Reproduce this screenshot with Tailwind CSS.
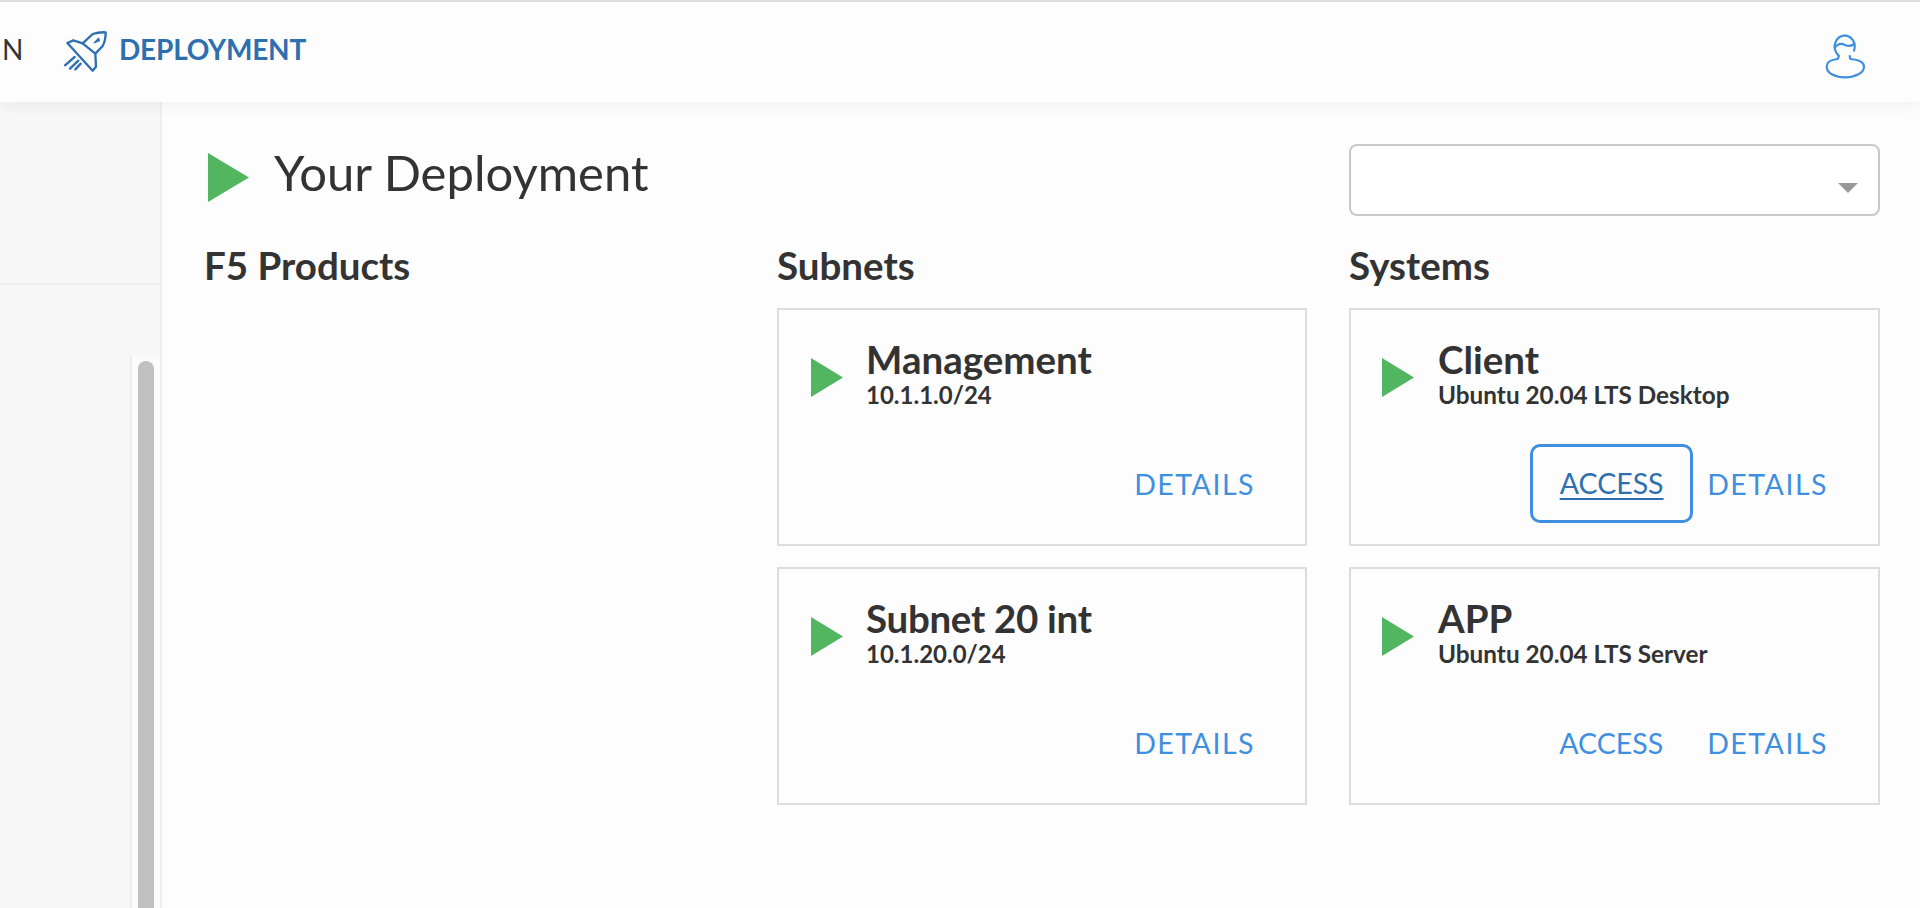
<!DOCTYPE html>
<html lang="en">
<head>
  <meta charset="UTF-8">
  <meta name="viewport" content="width=device-width, initial-scale=1.0">
  <title>Your Deployment</title>
  <script src="https://cdn.jsdelivr.net/npm/@tailwindcss/browser@4"></script>
</head>
<body class="bg-[#fdfdfd] h-[908px] overflow-hidden font-['Lato',sans-serif] text-[#333]">

  <!-- Top nav -->
  <header class="relative z-10 h-[102px] border-t-2 border-[#ddd] bg-[#fdfdfd] shadow-[0_4px_14px_rgba(0,0,0,0.05)] flex items-start">
    <span class="text-[28px] leading-none mt-[33px] w-[40px] pl-[2px]">N</span>
    <svg class="w-[70px] h-[70px] mt-[8px] shrink-0" viewBox="0 0 210 210" fill="none" stroke="#2e6fb0" stroke-width="7" stroke-linejoin="round" stroke-linecap="round">
      <path d="M82 99 L100 91 L128 100 L158 72 Q176 66 197 67 Q197 92 188 108 L166 131 L168 170 L158 182 Z"/>
      <path d="M128 100 L166 131"/>
      <path d="M163 98 L176 85 L178 92 Z" fill="#2e6fb0" stroke-width="4"/>
      <path d="M75 166 L104 141 M90 176 L115 152 M106 178 L122 161"/>
    </svg>
    <span class="text-[28px] leading-none font-bold text-[#2e6fb0] mt-[33px] ml-[9px] tracking-[-0.2px]">DEPLOYMENT</span>
    <svg class="w-[70px] h-[70px] mt-[18px] ml-auto mr-[41px] shrink-0" viewBox="0 0 210 210" fill="none" stroke="#3f8fe0" stroke-width="6.5" stroke-linecap="round" stroke-linejoin="round">
      <path d="M135 92 A30 33 0 1 0 82 98 Q86 104 90 108 L86 117 C65 119 53 126 53 140 C53 160 80 172 108 172 C136 172 165 160 165 140 C165 126 150 119 124 117 L122 108"/>
      <path d="M77 82 Q92 66 108 75 Q122 82 136 72"/>
    </svg>
  </header>

  <div class="flex h-[806px]">
    <!-- Sidebar -->
    <aside class="w-[162px] shrink-0 bg-[#f7f7f7] border-r-2 border-[#eee] flex flex-col">
      <div class="h-[183px] shrink-0 border-b-2 border-[#eee]"></div>
      <div class="flex-1 flex justify-end pt-[70px]">
        <div class="w-[30px] bg-[#fbfbfb] border-l-2 border-[#eee] pt-[6px] pl-[6px]">
          <div class="w-[16px] h-full rounded-t-lg bg-[#c0c0c0]"></div>
        </div>
      </div>
    </aside>

    <!-- Main -->
    <main class="pl-[43px] grid grid-cols-[530px_530px_531px] gap-x-[42px] content-start">
      <div class="col-span-2 flex items-start pt-[51px] h-[141px]">
        <svg class="w-[41px] h-[49px] ml-[3px] shrink-0" viewBox="0 0 41 49"><polygon points="0,0 41,24.5 0,49" fill="#52b55f"/></svg>
        <h1 class="text-[49px] leading-[56px] ml-[25px] -mt-[9px]">Your Deployment</h1>
      </div>
      <div class="pt-[42px]">
        <div class="relative h-[72px] border-2 border-[#c8c8c8] rounded-lg bg-white">
          <svg class="absolute right-[20px] top-[37px] w-[20px] h-[10px]" viewBox="0 0 20 10"><polygon points="0,0 20,0 10,10" fill="#999"/></svg>
        </div>
      </div>

      <h2 class="text-[38.5px] leading-[46px] font-bold h-[66px] -ml-[1px] -mt-[1px]">F5 Products</h2>
      <h2 class="text-[38.5px] leading-[46px] font-bold h-[66px] -mt-[1px]">Subnets</h2>
      <h2 class="text-[38.5px] leading-[46px] font-bold h-[66px] -mt-[1px]">Systems</h2>

      <div></div>

      <!-- Subnets -->
      <div class="flex flex-col gap-[21px]">
        <div class="h-[238px] border-2 border-[#ddd] flex flex-col pl-[32px] pr-[50px]">
          <div class="flex items-start pt-[48px] h-[158px]">
            <svg class="w-[32px] h-[39px] shrink-0" viewBox="0 0 32 39"><polygon points="0,0 32,19.5 0,39" fill="#52b55f"/></svg>
            <div class="ml-[23px] -mt-[21px]">
              <div class="text-[38.5px] leading-[44px] font-bold">Management</div>
              <div class="text-[24px] leading-[24px] font-bold mt-[2px]">10.1.1.0/24</div>
            </div>
          </div>
          <div class="flex justify-end">
            <a class="text-[28.5px] leading-[32px] text-[#3f8fe0] tracking-[1.5px]">DETAILS</a>
          </div>
        </div>
        <div class="h-[238px] border-2 border-[#ddd] flex flex-col pl-[32px] pr-[50px]">
          <div class="flex items-start pt-[48px] h-[158px]">
            <svg class="w-[32px] h-[39px] shrink-0" viewBox="0 0 32 39"><polygon points="0,0 32,19.5 0,39" fill="#52b55f"/></svg>
            <div class="ml-[23px] -mt-[21px]">
              <div class="text-[38.5px] leading-[44px] font-bold tracking-[-0.3px]">Subnet 20 int</div>
              <div class="text-[24px] leading-[24px] font-bold mt-[2px]">10.1.20.0/24</div>
            </div>
          </div>
          <div class="flex justify-end">
            <a class="text-[28.5px] leading-[32px] text-[#3f8fe0] tracking-[1.5px]">DETAILS</a>
          </div>
        </div>
      </div>

      <!-- Systems -->
      <div class="flex flex-col gap-[21px]">
        <div class="h-[238px] border-2 border-[#ddd] flex flex-col pl-[31px] pr-[50px]">
          <div class="flex items-start pt-[48px] h-[158px]">
            <svg class="w-[32px] h-[39px] shrink-0" viewBox="0 0 32 39"><polygon points="0,0 32,19.5 0,39" fill="#52b55f"/></svg>
            <div class="ml-[24px] -mt-[21px]">
              <div class="text-[38.5px] leading-[44px] font-bold">Client</div>
              <div class="text-[24.3px] leading-[24px] font-bold mt-[2px]">Ubuntu 20.04 LTS Desktop</div>
            </div>
          </div>
          <div class="flex justify-end items-center gap-[14px] -mt-[24px]">
            <a class="w-[163px] h-[79px] border-[3px] border-[#3f8fe0] rounded-[10px] flex items-center justify-center text-[28.5px] text-[#2e6fb0] underline underline-offset-4">ACCESS</a>
            <a class="text-[28.5px] leading-[32px] text-[#3f8fe0] tracking-[1.5px]">DETAILS</a>
          </div>
        </div>
        <div class="h-[238px] border-2 border-[#ddd] flex flex-col pl-[31px] pr-[50px]">
          <div class="flex items-start pt-[48px] h-[158px]">
            <svg class="w-[32px] h-[39px] shrink-0" viewBox="0 0 32 39"><polygon points="0,0 32,19.5 0,39" fill="#52b55f"/></svg>
            <div class="ml-[24px] -mt-[21px]">
              <div class="text-[38.5px] leading-[44px] font-bold">APP</div>
              <div class="text-[24.3px] leading-[24px] font-bold mt-[2px]">Ubuntu 20.04 LTS Server</div>
            </div>
          </div>
          <div class="flex justify-end gap-[44px]">
            <a class="text-[28.5px] leading-[32px] text-[#3f8fe0]">ACCESS</a>
            <a class="text-[28.5px] leading-[32px] text-[#3f8fe0] tracking-[1.5px]">DETAILS</a>
          </div>
        </div>
      </div>
    </main>
  </div>
</body>
</html>
